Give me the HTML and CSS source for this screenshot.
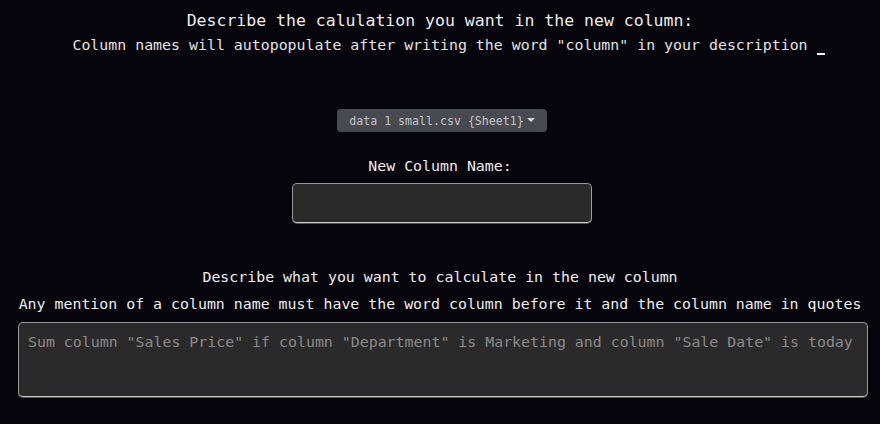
FILE: index.html
```html
<!DOCTYPE html>
<html>
<head>
<meta charset="utf-8">
<link rel="stylesheet" href="styles.css">
</head>
<body>
<main class="page">
  <h1 class="title">Describe the calulation you want in the new column:</h1>
  <p class="hint"><span class="hint-text">Column names will autopopulate after writing the word "column" in your description<span class="cursor"></span></span></p>
  <button class="dropdown">data 1 small.csv {Sheet1}<span class="caret"></span></button>
  <label class="label">New Column Name:</label>
  <input class="name-input" type="text">
  <p class="desc">Describe what you want to calculate in the new column</p>
  <p class="desc-note">Any mention of a column name must have the word column before it and the column name in quotes</p>
  <textarea class="calc" placeholder="Sum column &quot;Sales Price&quot; if column &quot;Department&quot; is Marketing and column &quot;Sale Date&quot; is today"></textarea>
</main>
</body>
</html>
```
FILE: styles.css
```css
html, body {
  margin: 0;
  padding: 0;
  background: #06050b;
  height: 100%;
  overflow: hidden;
}
.page {
  display: flex;
  flex-direction: column;
  align-items: center;
  font-family: "DejaVu Sans Mono", "Liberation Mono", monospace;
  color: #eeeeee;
  padding-top: 11px;
}
.title {
  margin: 0;
  font-size: 16.5px;
  font-weight: normal;
  line-height: 20px;
}
.hint {
  margin: 4px 0 0;
  font-size: 14.9px;
  line-height: 20px;
  color: #e2e2e2;
}
.hint-text {
  position: relative;
}
.cursor {
  position: absolute;
  left: calc(100% + 9px);
  top: 17px;
  width: 8px;
  height: 2px;
  background: #f4f4f4;
}
.dropdown {
  margin-top: 54px;
  width: 210px;
  height: 23px;
  border: none;
  border-radius: 4px;
  background: #474a50;
  color: #c3c5c8;
  font-family: "DejaVu Sans Mono", "Liberation Mono", monospace;
  font-size: 11.6px;
  display: flex;
  align-items: center;
  justify-content: center;
  padding: 0;
  margin-left: 4px;
}
.caret {
  display: inline-block;
  width: 0;
  height: 0;
  margin-left: 3px;
  margin-top: -2px;
  border-left: 4px solid transparent;
  border-right: 4px solid transparent;
  border-top: 4px solid #d4d6d8;
}
.label {
  margin-top: 24px;
  font-size: 14.9px;
  line-height: 20px;
  color: #eeeeee;
}
.name-input {
  margin-top: 7px;
  margin-left: 4px;
  box-sizing: border-box;
  width: 300px;
  height: 40px;
  background: #2a2a2a;
  border: 1px solid #9a9a9a;
  border-bottom-color: #c8c8c8;
  border-radius: 5px;
  box-shadow: 0 1px 0 #555;
  outline: none;
}
.desc {
  margin: 44px 0 0;
  font-size: 14.9px;
  line-height: 20px;
  color: #eeeeee;
}
.desc-note {
  margin: 7px 0 0;
  font-size: 14.9px;
  line-height: 20px;
  color: #eeeeee;
}
.calc {
  margin-top: 8px;
  margin-left: 6px;
  box-sizing: border-box;
  width: 850px;
  height: 75px;
  background: #2a2a2a;
  border: 1px solid #9a9a9a;
  border-bottom-color: #c8c8c8;
  border-radius: 5px;
  box-shadow: 0 1px 0 #555;
  resize: none;
  outline: none;
  padding: 9px 9px;
  font-family: "DejaVu Sans Mono", "Liberation Mono", monospace;
  font-size: 14.9px;
  line-height: 20px;
  color: #dddddd;
}
.calc::placeholder {
  color: #8a8a8a;
}
```
